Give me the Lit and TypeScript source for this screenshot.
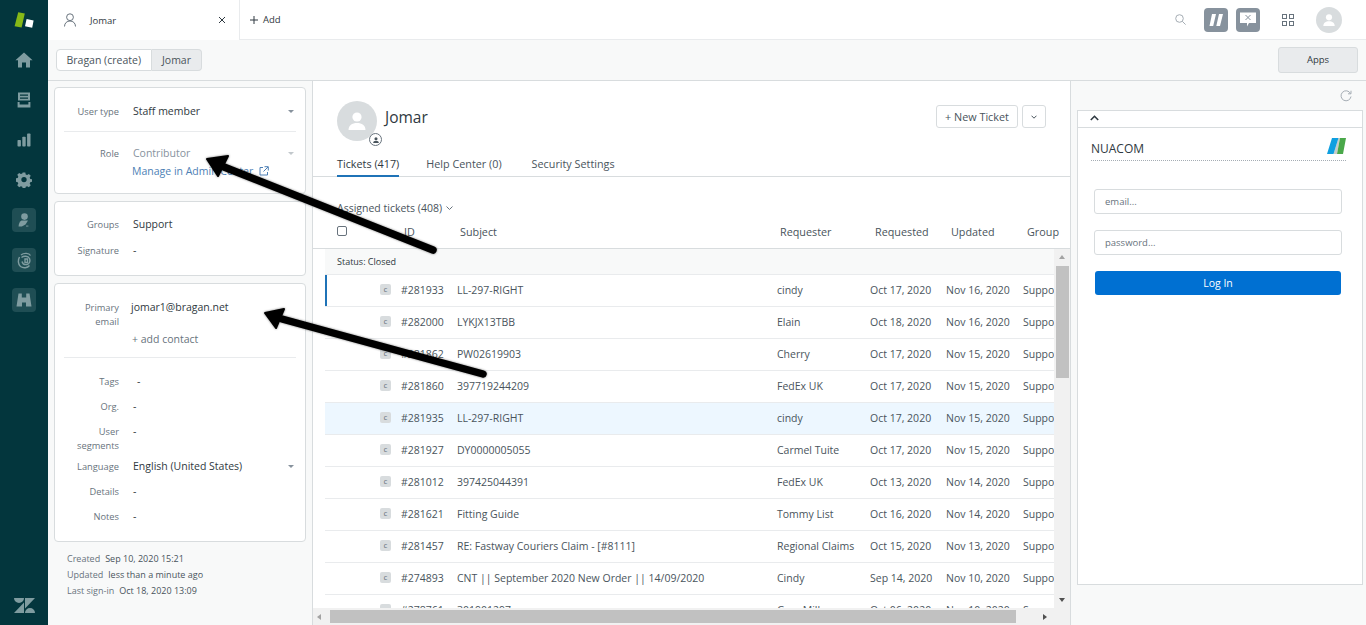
import { LitElement, html, css, svg } from "lit";
import { customElement } from "lit/decorators.js";

interface TicketRow {
  id: string;
  subject: string;
  requester: string;
  requested: string;
  updated: string;
  active?: boolean;
  hover?: boolean;
}

const TICKETS: TicketRow[] = [
  { id: "#281933", subject: "LL-297-RIGHT", requester: "cindy", requested: "Oct 17, 2020", updated: "Nov 16, 2020", active: true },
  { id: "#282000", subject: "LYKJX13TBB", requester: "Elain", requested: "Oct 18, 2020", updated: "Nov 16, 2020" },
  { id: "#281862", subject: "PW02619903", requester: "Cherry", requested: "Oct 17, 2020", updated: "Nov 15, 2020" },
  { id: "#281860", subject: "397719244209", requester: "FedEx UK", requested: "Oct 17, 2020", updated: "Nov 15, 2020" },
  { id: "#281935", subject: "LL-297-RIGHT", requester: "cindy", requested: "Oct 17, 2020", updated: "Nov 15, 2020", hover: true },
  { id: "#281927", subject: "DY0000005055", requester: "Carmel Tuite", requested: "Oct 17, 2020", updated: "Nov 15, 2020" },
  { id: "#281012", subject: "397425044391", requester: "FedEx UK", requested: "Oct 13, 2020", updated: "Nov 14, 2020" },
  { id: "#281621", subject: "Fitting Guide", requester: "Tommy List", requested: "Oct 16, 2020", updated: "Nov 14, 2020" },
  { id: "#281457", subject: "RE: Fastway Couriers Claim - [#8111]", requester: "Regional Claims", requested: "Oct 15, 2020", updated: "Nov 13, 2020" },
  { id: "#274893", subject: "CNT || September 2020 New Order || 14/09/2020", requester: "Cindy", requested: "Sep 14, 2020", updated: "Nov 10, 2020" },
  { id: "#278761", subject: "301901297", requester: "Gary Mills", requested: "Oct 06, 2020", updated: "Nov 10, 2020" },
];

const caret = html`<span class="caret"></span>`;

const personPath = svg`<circle cx="12" cy="8" r="4.6"/><path d="M3.5 21c0-4.6 3.6-7 8.5-7s8.5 2.4 8.5 7z"/>`;

/* =========================
   LEFT NAV
========================= */
@customElement("side-nav")
class SideNav extends LitElement {
  static styles = css`
    :host {
      display: flex;
      flex-direction: column;
      align-items: center;
      width: 48px;
      height: 625px;
      background: #03363d;
      flex: none;
    }
    svg { display: block; fill: #7f9ca0; }
    .logo { margin-top: 12px; margin-bottom: 12px; fill: none; }
    .item { height: 40px; width: 48px; display: flex; align-items: center; justify-content: center; }
    .app {
      width: 24px;
      height: 24px;
      margin: 8px 0;
      border-radius: 4px;
      background: #1f4e54;
      display: flex;
      align-items: center;
      justify-content: center;
    }
    .mail { fill: none; stroke: #7f9ca0; stroke-width: 1.4; }
    .spacer { flex: 1; }
    .zen { margin-bottom: 12px; }
  `;

  render() {
    return html`
      <svg class="logo" width="20" height="16" viewBox="0 0 20 16">
        <path d="M4.2 0.2 L10.8 1.6 L7.6 15.6 L0.6 14.2 Z" fill="#86b817"/>
        <path d="M12.6 7 L19.6 8.4 L18.2 15.8 L11 14.2 Z" fill="#fff"/>
      </svg>
      <div class="item">
        <svg width="18" height="16" viewBox="0 0 18 16"><path d="M9 0.5 L17.6 8.2 L15 8.2 L15 15.5 L11 15.500 L11 10.500 L7 10.500 L7 15.500 L3 15.500 L3 8.200 L0.400 8.200 Z"/></svg>
      </div>
      <div class="item">
        <svg width="14" height="16" viewBox="0 0 14 16"><path d="M1 0.500 H13 V8.500 H1 Z M3 2.400 V3.800 H11 V2.400 Z M3 5.400 V6.800 H11 V5.400 Z M0.600 10 H2.600 V12.600 H11.400 V10 H13.400 V15.400 H0.600 Z" fill-rule="evenodd"/></svg>
      </div>
      <div class="item">
        <svg width="14" height="14" viewBox="0 0 14 14"><rect x="0.500" y="7" width="3.400" height="6.500" rx="0.800"/><rect x="5.300" y="3.800" width="3.400" height="9.700" rx="0.800"/><rect x="10.100" y="0.500" width="3.400" height="13" rx="0.800"/></svg>
      </div>
      <div class="item">
        <svg width="16" height="16" viewBox="0 0 16 16"><path fill-rule="evenodd" d="M6.600 0.500h2.800l.4 2 1.500.6 1.800-1.100 2 2-1.100 1.800.6 1.500 2 .4v2.600l-2 .4-.6 1.500 1.100 1.800-2 2-1.800-1.100-1.500.6-.4 2H6.600l-.4-2-1.500-.6-1.800 1.100-2-2 1.100-1.800-.6-1.500-2-.4V6.700l2-.4.6-1.500L.9 3l2-2 1.800 1.100 1.500-.6zM8 5.200a2.800 2.800 0 1 0 0 5.600 2.800 2.800 0 0 0 0-5.600z" transform="translate(0.400 0) scale(0.95)"/></svg>
      </div>
      <div class="app">
        <svg width="12" height="15" viewBox="0 0 12 15"><circle cx="6.500" cy="3.600" r="3.300"/><path d="M3.500 7.500h6.500L7.500 11.500 3.800 13.500 H0.600C0.600 11 1.500 8.500 3.500 7.500z"/><rect x="8" y="12.600" width="2.400" height="0.900"/></svg>
      </div>
      <div class="app">
        <svg class="mail" width="15" height="17" viewBox="0 0 15 17"><path d="M4 3C7 0.500 12 1 13.500 3.500M2.500 5C0.800 8 1 12.500 3.500 14.500 6.500 16.500 10.500 16 12.500 13.500M4.500 5.500C7 3.500 11 4 12.500 6.500 13.500 9 12.500 12 10 12.500 7.500 13 5.500 11.500 5 9.500"/><path d="M8 7h2.500v3.500H8z"/></svg>
      </div>
      <div class="app">
        <svg width="16" height="14" viewBox="0 0 16 14"><path d="M2.500 0.500H5.800V4.500H10.200V0.500H13.500L15.500 13.500H10V9.500H6V13.500H0.500Z"/></svg>
      </div>
      <div class="spacer"></div>
      <svg class="zen" width="21" height="15" viewBox="0 0 21 15"><path d="M10 4.500V15H0zM10 0a5 5 0 0 1-10 0zM11 15a5 5 0 0 1 10 0zM11 10.500V0h10z"/></svg>
    `;
  }
}

/* =========================
   TOP BARS
========================= */
@customElement("top-bar")
class TopBar extends LitElement {
  static styles = css`
    :host {
      display: flex;
      align-items: stretch;
      height: 40px;
      box-sizing: border-box;
      background: #fff;
      border-bottom: 1px solid #e9ebed;
      font-size: 9.500px;
      color: #2f3941;
    }
    .tab {
      width: 192px;
      box-sizing: border-box;
      background: #fff;
      border-right: 1px solid #e9ebed;
      margin-bottom: -1px;
      display: flex;
      align-items: center;
      padding: 0 10px 0 15px;
    }
    .tab .name { margin-left: 13px; flex: 1; }
    .tab svg { display: block; }
    .close { margin-right: 3px; }
    .add { display: flex; align-items: center; margin-left: 10px; gap: 5px; }
    .right { margin-left: auto; display: flex; align-items: center; padding-right: 24px; }
    .sq {
      width: 24px;
      height: 24px;
      border-radius: 4px;
      background: #87929d;
      display: flex;
      align-items: center;
      justify-content: center;
    }
    .avatar {
      width: 26px;
      height: 26px;
      border-radius: 50%;
      background: #d8dcde;
      overflow: hidden;
      display: flex;
      align-items: center;
      justify-content: center;
    }
    .search { margin-right: 18px; }
    .sq + .sq { margin-left: 8px; }
    .grid { margin: 0 22px 0 22px; }
  `;

  render() {
    return html`
      <div class="tab">
        <svg width="14" height="14" viewBox="0 0 14 14" fill="none" stroke="#68737d" stroke-width="1"><circle cx="7" cy="4.200" r="3.400"/><path d="M1.500 13.500c0-3.500 2.500-5.500 5.500-5.500s5.500 2 5.500 5.500"/></svg>
        <span class="name">Jomar</span>
        <svg class="close" width="8" height="8" viewBox="0 0 8 8" stroke="#2f3941" stroke-width="1"><path d="M1 1l6 6M7 1L1 7"/></svg>
      </div>
      <div class="add">
        <svg width="8" height="8" viewBox="0 0 8 8" stroke="#2f3941" stroke-width="1"><path d="M4 0v8M0 4h8"/></svg>
        <span>Add</span>
      </div>
      <div class="right">
        <svg class="search" width="11" height="11" viewBox="0 0 11 11" fill="none" stroke="#a5adb4" stroke-width="1"><circle cx="4.500" cy="4.500" r="3.800"/><path d="M7.300 7.300l3.300 3.300"/></svg>
        <div class="sq">
          <svg width="14" height="12" viewBox="0 0 14 12" fill="#fff"><path d="M3 0H7L4.200 12H0.500ZM10 0H14L11 12H7.300Z"/></svg>
        </div>
        <div class="sq">
          <svg width="16" height="15" viewBox="0 0 16 15"><path d="M0 0.500H16V11H9L7 14.500V11H0Z" fill="#fff"/><path d="M5.500 3L10.500 8M10.500 3L5.500 8" stroke="#87929d" stroke-width="1"/></svg>
        </div>
        <svg class="grid" width="12" height="12" viewBox="0 0 12 12" fill="none" stroke="#68737d" stroke-width="1"><rect x="0.500" y="0.500" width="4" height="4"/><rect x="7.500" y="0.500" width="4" height="4"/><rect x="0.500" y="7.500" width="4" height="4"/><rect x="7.500" y="7.500" width="4" height="4"/></svg>
        <div class="avatar">
          <svg width="16" height="16" viewBox="0 0 24 24" fill="#fff">${personPath}</svg>
        </div>
      </div>
    `;
  }
}

@customElement("sub-bar")
class SubBar extends LitElement {
  static styles = css`
    :host {
      display: flex;
      align-items: center;
      height: 41px;
      box-sizing: border-box;
      background: #f8f9f9;
      border-bottom: 1px solid #d8dcde;
      padding: 0 8px 1px 8px;
      font-size: 10.500px;
      color: #49545c;
    }
    .crumb {
      height: 22px;
      box-sizing: border-box;
      display: flex;
      align-items: center;
      border: 1px solid #d8dcde;
      padding: 0 9.500px;
      background: #fff;
      border-radius: 4px 0 0 4px;
    }
    .crumb.on {
      background: #e9ebed;
      border-left: none;
      border-radius: 0 4px 4px 0;
      padding: 0 10.500px;
    }
    .apps {
      margin-left: auto;
      width: 80px;
      height: 26px;
      box-sizing: border-box;
      border: 1px solid #d8dcde;
      border-radius: 3px;
      background: #e9ebed;
      display: flex;
      align-items: center;
      justify-content: center;
      font-size: 9.500px;
      color: #2f3941;
    }
  `;

  render() {
    return html`
      <div class="crumb">Bragan (create)</div>
      <div class="crumb on">Jomar</div>
      <div class="apps">Apps</div>
    `;
  }
}

/* =========================
   USER SIDEBAR
========================= */
@customElement("user-panel")
class UserPanel extends LitElement {
  static styles = css`
    :host {
      display: block;
      width: 265px;
      flex: none;
      box-sizing: border-box;
      background: #f8f9f9;
      padding: 6px 6px 0;
      border-right: 1px solid #d8dcde;
      font-size: 10.500px;
      color: #2f3941;
    }
    .card {
      background: #fff;
      border: 1px solid #d8dcde;
      border-radius: 4px;
      margin-bottom: 7px;
      box-sizing: border-box;
      padding: 0 9px;
    }
    .row {
      display: grid;
      grid-template-columns: 55px 1fr 10px;
      column-gap: 14px;
      align-items: baseline;
    }
    .row label {
      font-size: 9.300px;
      color: #68737d;
      text-align: right;
      line-height: 14px;
    }
    .caret {
      width: 0;
      height: 0;
      border: 3px solid transparent;
      border-top: 3.500px solid #87929d;
      border-bottom: none;
      justify-self: center;
      align-self: center;
    }
    .caret.dim { border-top-color: #c2c8cc; }
    hr {
      border: none;
      border-top: 1px solid #e9ebed;
      margin: 0;
    }
    .muted { color: #87929d; }
    .email { margin-left: -2px; }
    .addc { color: #68737d; margin-left: -1px; }
    .tagv { margin-left: 4px; }
    .link {
      color: #4d7fb5;
      display: flex;
      align-items: center;
      gap: 6px;
      margin: 3px 0 0 68px;
    }
    .link svg { display: block; }
    .c1 { height: 107px; }
    .c2 { height: 75px; }
    .c3 { height: 259px; }
    .meta {
      font-size: 9px;
      line-height: 16px;
      color: #68737d;
      padding: 2px 0 0 13px;
    }
    .meta b { font-weight: 400; color: #49545c; margin-left: 5px; }
  `;

  private field(label: string, value: unknown, top: number, extra: unknown = "") {
    return html`<div class="row" style="padding-top:${top}px"><label>${label}</label><span>${value}</span>${extra}</div>`;
  }

  render() {
    return html`
      <div class="card c1">
        ${this.field("User type", "Staff member", 16, caret)}
        <hr style="margin-top:12px" />
        ${this.field("Role", html`<span class="muted">Contributor</span>`, 14, html`<span class="caret dim"></span>`)}
        <div class="link">Manage in Admin Center
          <svg width="10" height="10" viewBox="0 0 10 10" fill="none" stroke="#4d7fb5" stroke-width="1"><path d="M4 1.500H1V9H8.500V6M5.500 0.700H9.300V4.500M9 1L4.500 5.500"/></svg>
        </div>
      </div>
      <div class="card c2">
        ${this.field("Groups", "Support", 15)}
        ${this.field("Signature", "-", 11)}
      </div>
      <div class="card c3">
        ${this.field("Primary email", html`<span class="email">jomar1@bragan.net</span>`, 16)}
        <div class="row" style="padding-top:3px"><label></label><span class="addc">+ add contact</span></div>
        <hr style="margin-top:11px" />
        ${this.field("Tags", html`<span class="tagv">-</span>`, 16)}
        ${this.field("Org.", "-", 10)}
        ${this.field("User segments", "-", 10)}
        ${this.field("Language", "English (United States)", 6, caret)}
        ${this.field("Details", "-", 10)}
        ${this.field("Notes", "-", 10)}
      </div>
      <div class="meta">
        <div>Created<b>Sep 10, 2020 15:21</b></div>
        <div>Updated<b>less than a minute ago</b></div>
        <div>Last sign-in<b>Oct 18, 2020 13:09</b></div>
      </div>
    `;
  }
}

/* =========================
   USER PROFILE + TICKETS
========================= */
@customElement("ticket-view")
class TicketView extends LitElement {
  static styles = css`
    :host {
      display: flex;
      flex-direction: column;
      width: 758px;
      flex: none;
      box-sizing: border-box;
      background: #fff;
      border-right: 1px solid #d8dcde;
      font-size: 10.500px;
      color: #49545c;
      overflow: hidden;
    }
    .head {
      display: flex;
      padding: 20px 24px 0 24px;
      height: 68px;
      box-sizing: border-box;
    }
    .avatar {
      position: relative;
      width: 40px;
      height: 40px;
      border-radius: 50%;
      background: #d8dcde;
      display: flex;
      align-items: center;
      justify-content: center;
      flex: none;
    }
    .badge {
      position: absolute;
      right: -5px;
      bottom: -5px;
      width: 13px;
      height: 13px;
      box-sizing: border-box;
      border-radius: 50%;
      background: #fff;
      border: 1px solid #68737d;
      display: flex;
      align-items: center;
      justify-content: center;
    }
    h1 {
      font-size: 15.500px;
      font-weight: 400;
      color: #2f3941;
      margin: 5px 0 0 8px;
      line-height: 22px;
    }
    .actions { margin-left: auto; display: flex; gap: 4px; padding-top: 4px; }
    .btn {
      height: 23px;
      box-sizing: border-box;
      border: 1px solid #d8dcde;
      border-radius: 3px;
      display: flex;
      align-items: center;
      justify-content: center;
      color: #49545c;
    }
    .btn.new { width: 82px; font-size: 10.800px; }
    .btn.more { width: 24px; }
    .tabs {
      display: flex;
      gap: 27px;
      padding-left: 24px;
      height: 28px;
      box-sizing: border-box;
      border-bottom: 1px solid #d8dcde;
      font-size: 10.800px;
    }
    .tabs span { height: 28px; box-sizing: border-box; padding-top: 7px; }
    .tabs span:last-child { margin-left: 3px; }
    .tabs .on { color: #2f3941; border-bottom: 2px solid #1f73b7; }
    .assigned {
      display: flex;
      align-items: center;
      gap: 4px;
      padding: 20px 0 0 24px;
      height: 22px;
      box-sizing: content-box;
    }
    .thead {
      height: 30px;
      box-sizing: border-box;
      display: grid;
      grid-template-columns: 67px 56px 320px 95px 76px 76px 1fr;
      align-items: center;
      padding: 0 0 5px 24px;
      border-bottom: 1px solid #d8dcde;
      font-size: 10.800px;
      color: #49545c;
    }
    .check {
      width: 10px;
      height: 10px;
      border: 1px solid #68737d;
      border-radius: 2px;
      box-sizing: border-box;
    }
    .body {
      flex: 1;
      min-height: 0;
      display: flex;
      overflow: hidden;
    }
    .list { flex: 1; min-width: 0; padding-left: 12px; overflow: hidden; }
    .status {
      height: 26px;
      background: #f8f9f9;
      border-bottom: 1px solid #e9ebed;
      box-sizing: border-box;
      padding-left: 12px;
      display: flex;
      align-items: center;
      font-size: 9px;
      color: #2f3941;
    }
    .row {
      height: 32px;
      box-sizing: border-box;
      border-bottom: 1px solid #e9ebed;
      padding-bottom: 2px;
      display: grid;
      grid-template-columns: 55px 21px 56px 320px 93px 76px 77px 1fr;
      align-items: center;
      white-space: nowrap;
      overflow: hidden;
    }
    .row.active { box-shadow: inset 2px 0 0 #1f73b7; }
    .row.hover { background: #edf7ff; }
    .tag {
      grid-column: 2;
      width: 11px;
      height: 11px;
      border-radius: 2px;
      background: #d8dcde;
      color: #68737d;
      font-size: 8px;
      line-height: 10px;
      text-align: center;
    }
    .vbar {
      width: 16px;
      flex: none;
      background: #f1f1f1;
      display: flex;
      flex-direction: column;
      align-items: center;
    }
    .vbar .thumb { width: 13px; height: 112px; background: #c1c1c1; }
    .up, .down { flex: none; width: 0; height: 0; border: 3.500px solid transparent; }
    .up { border-bottom: 4px solid #a3a3a3; border-top: none; margin: 6px 0 7px; }
    .down { border-top: 4px solid #505050; border-bottom: none; margin: auto 0 6px; }
    .hbar {
      height: 17px;
      flex: none;
      background: #f1f1f1;
      display: flex;
      align-items: center;
    }
    .hbar .thumb { width: 686px; height: 13px; background: #c1c1c1; margin-left: 9px; }
    .left, .right { flex: none; width: 0; height: 0; border: 3.500px solid transparent; }
    .left { border-right: 4px solid #a3a3a3; border-left: none; margin-left: 4px; }
    .right { border-left: 4px solid #505050; border-right: none; margin-left: 27px; }
  `;

  render() {
    return html`
      <div class="head">
        <div class="avatar">
          <svg width="24" height="24" viewBox="0 0 24 24" fill="#fff">${personPath}</svg>
          <span class="badge"><svg width="8" height="8" viewBox="0 0 24 24" fill="#49545c">${personPath}</svg></span>
        </div>
        <h1>Jomar</h1>
        <div class="actions">
          <div class="btn new">+ New Ticket</div>
          <div class="btn more"><svg width="6" height="4" viewBox="0 0 6 4" fill="none" stroke="#49545c"><path d="M0.500 0.700L3 3.200 5.500 0.700"/></svg></div>
        </div>
      </div>
      <div class="tabs">
        <span class="on">Tickets (417)</span>
        <span>Help Center (0)</span>
        <span>Security Settings</span>
      </div>
      <div class="assigned">Assigned tickets (408)
        <svg width="7" height="4" viewBox="0 0 7 4" fill="none" stroke="#68737d"><path d="M0.500 0.500L3.500 3.500 6.500 0.500"/></svg>
      </div>
      <div class="thead">
        <div class="check"></div>
        <span>ID</span><span>Subject</span><span>Requester</span><span>Requested</span><span>Updated</span><span>Group</span>
      </div>
      <div class="body">
        <div class="list">
          <div class="status">Status: Closed</div>
          ${TICKETS.map(t => html`
            <div class="row ${t.active ? "active" : ""} ${t.hover ? "hover" : ""}">
              <span class="tag">c</span>
              <span>${t.id}</span>
              <span>${t.subject}</span>
              <span>${t.requester}</span>
              <span>${t.requested}</span>
              <span>${t.updated}</span>
              <span>Support</span>
            </div>
          `)}
        </div>
        <div class="vbar">
          <span class="up"></span>
          <span class="thumb"></span>
          <span class="down"></span>
        </div>
      </div>
      <div class="hbar">
        <span class="left"></span>
        <span class="thumb"></span>
        <span class="right"></span>
      </div>
    `;
  }
}

/* =========================
   APPS PANEL
========================= */
@customElement("apps-panel")
class AppsPanel extends LitElement {
  static styles = css`
    :host {
      display: block;
      flex: 1;
      min-width: 0;
      background: #f8f9f9;
      padding: 0 3px 0 6px;
      font-size: 9.500px;
    }
    .reload { display: flex; justify-content: flex-end; height: 29px; align-items: center; padding-right: 11px; }
    .box {
      border: 1px solid #d8dcde;
      background: #fff;
      height: 475px;
      box-sizing: border-box;
    }
    .collapse {
      height: 17px;
      box-sizing: border-box;
      border-bottom: 1px solid #d8dcde;
      padding: 4px 0 0 12px;
    }
    .collapse svg { display: block; }
    .inner { padding: 0 16px 0 13px; }
    .title {
      display: flex;
      justify-content: space-between;
      align-items: flex-end;
      height: 33px;
      box-sizing: border-box;
      border-bottom: 1px dotted #a5adb4;
      font-size: 12px;
      color: #2f3941;
      padding-bottom: 3px;
    }
    .title svg { margin-bottom: 3px; }
    .form { padding: 28px 4px 0 3px; }
    .input {
      height: 25px;
      box-sizing: border-box;
      border: 1px solid #d8dcde;
      border-radius: 3px;
      display: flex;
      align-items: center;
      padding-left: 10px;
      color: #68737d;
    }
    .input + .input { margin-top: 16px; }
    .login {
      height: 24px;
      margin: 16px 1px 0;
      border-radius: 3px;
      background: #0070d2;
      color: #fff;
      font-size: 10.500px;
      display: flex;
      align-items: center;
      justify-content: center;
    }
  `;

  render() {
    return html`
      <div class="reload">
        <svg width="12" height="12" viewBox="0 0 12 12" fill="none" stroke="#a5adb4" stroke-width="1"><path d="M10.500 3.500A5 5 0 1 0 11 6.500M11 0.700V3.800H8"/></svg>
      </div>
      <div class="box">
        <div class="collapse">
          <svg width="9" height="6" viewBox="0 0 9 6" fill="none" stroke="#2f3941" stroke-width="1.600"><path d="M0.800 5L4.500 1.300 8.200 5"/></svg>
        </div>
        <div class="inner">
          <div class="title">
            <span>NUACOM</span>
            <svg width="19" height="16" viewBox="0 0 19 16">
              <path d="M6.500 16L11.500 0H13L10 16Z" fill="#c8ccc8"/>
              <path d="M5 0H11.500L6.500 16H0Z" fill="#0f9fe0"/>
              <path d="M13 0H19L16 16H10Z" fill="#4aa84a"/>
            </svg>
          </div>
          <div class="form">
            <div class="input">email...</div>
            <div class="input">password...</div>
            <div class="login">Log In</div>
          </div>
        </div>
      </div>
    `;
  }
}

/* =========================
   ROOT
========================= */
@customElement("app-root")
class AppRoot extends LitElement {
  static styles = css`
    :host {
      display: flex;
      position: relative;
      width: 1366px;
      height: 625px;
      overflow: hidden;
      font-family: "Open Sans", "Noto Sans", sans-serif;
      background: #fff;
    }
    .main { flex: 1; min-width: 0; display: flex; flex-direction: column; }
    .panes { flex: 1; min-height: 0; display: flex; }
    .arrows {
      position: absolute;
      left: 0;
      top: 0;
      pointer-events: none;
      filter: drop-shadow(0 0 1px rgba(0, 0, 0, 0.5));
    }
  `;

  render() {
    return html`
      <side-nav></side-nav>
      <div class="main">
        <top-bar></top-bar>
        <sub-bar></sub-bar>
        <div class="panes">
          <user-panel></user-panel>
          <ticket-view></ticket-view>
          <apps-panel></apps-panel>
        </div>
      </div>
      <svg class="arrows" width="1366" height="625" viewBox="0 0 1366 625">
        <g stroke="#000" stroke-width="7.500" stroke-linecap="round" fill="none">
          <path d="M433 250 L224 167" />
          <path d="M483 374 L282 319" />
        </g>
        <path d="M207 159 L228 156 L218 176 Z" fill="#000" stroke="#000" stroke-width="2" stroke-linejoin="round" />
        <path d="M265 313 L284 309 L276 328 Z" fill="#000" stroke="#000" stroke-width="2" stroke-linejoin="round" />
      </svg>
    `;
  }
}
